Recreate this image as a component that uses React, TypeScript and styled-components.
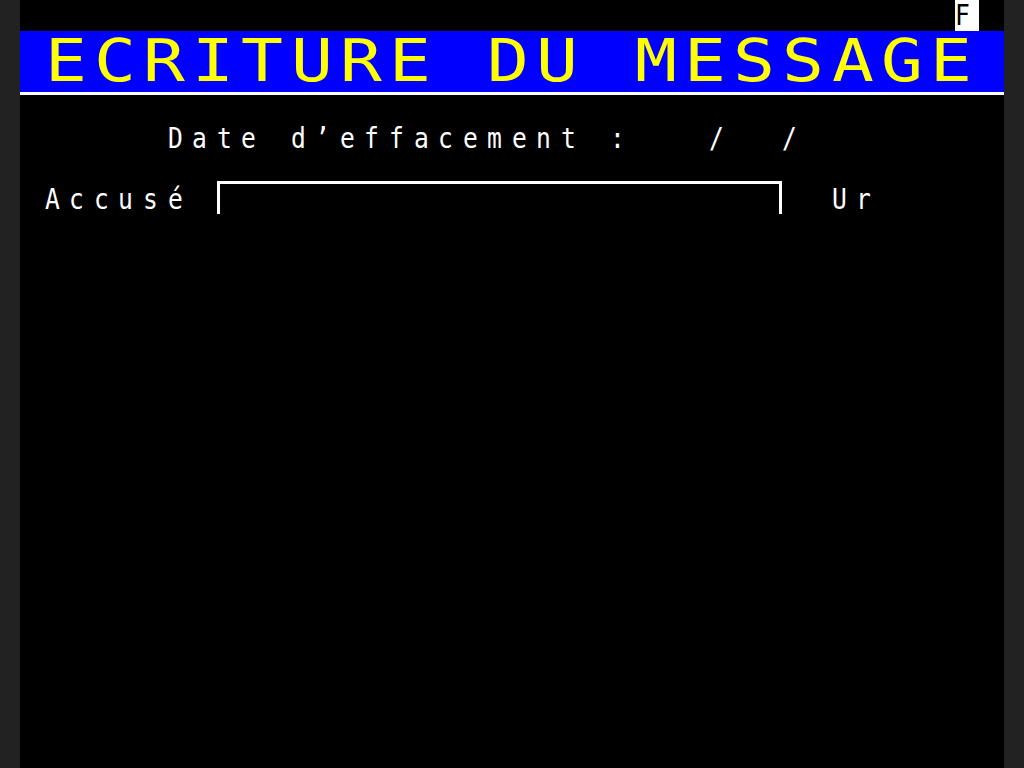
import styled, { createGlobalStyle } from "styled-components";

// Minitel geometry: 40 columns x 25 rows on a 984x768 tube
const COL = 24.6;
const ROW = 30.72;

const GlobalStyle = createGlobalStyle`
  html, body {
    margin: 0;
    padding: 0;
    background: #222222;
  }
  body {
    font-family: "DejaVu Sans Mono", "Liberation Mono", monospace;
  }
`;

const Monitor = styled.div`
  width: 1024px;
  height: 768px;
  display: flex;
  justify-content: center;
  background: #222222;
  overflow: hidden;
`;

const Screen = styled.div`
  width: ${COL * 40}px;
  height: 768px;
  background: #000000;
  display: flex;
  flex-direction: column;
`;

const Row = styled.div<{ $double?: boolean; $bg?: string; $rule?: boolean }>`
  display: grid;
  grid-template-columns: repeat(40, ${COL}px);
  grid-template-rows: 1fr;
  flex: none;
  height: ${(p) => (p.$double ? ROW * 2 : ROW)}px;
  background: ${(p) => p.$bg ?? "transparent"};
  box-sizing: border-box;
  border-top: ${(p) => (p.$rule ? "3px solid #ffffff" : "none")};
`;

const Cell = styled.div<{ $col: number; $double?: boolean; $fg: string; $bg?: string }>`
  grid-column: ${(p) => p.$col + 1} / span ${(p) => (p.$double ? 2 : 1)};
  grid-row: 1;
  color: ${(p) => p.$fg};
  background: ${(p) => p.$bg ?? "transparent"};
  font-size: ${(p) => (p.$double ? 58 : 29)}px;
  line-height: ${(p) => (p.$double ? ROW * 2 : ROW)}px;
  white-space: pre;
  overflow: visible;
`;

const Glyph = styled.span<{ $double?: boolean }>`
  display: inline-block;
  transform: scaleX(${(p) => (p.$double ? 1.2 : 0.85)});
  transform-origin: left center;
`;

const Field = styled.div<{ $from: number; $to: number }>`
  grid-column: ${(p) => p.$from + 1} / ${(p) => p.$to + 2};
  grid-row: 1;
  align-self: start;
  margin-top: -3px;
  height: 33px;
  box-sizing: border-box;
  border: 3px solid #ffffff;
  border-bottom: none;
`;

type TextProps = {
  col: number;
  text: string;
  fg?: string;
  bg?: string;
  double?: boolean;
};

function Text({ col, text, fg = "#ffffff", bg, double }: TextProps) {
  const step = double ? 2 : 1;
  return (
    <>
      {Array.from(text).map((ch, i) =>
        ch === " " && !bg ? null : (
          <Cell key={i} $col={col + i * step} $double={double} $fg={fg} $bg={bg}>
            <Glyph $double={double}>{ch}</Glyph>
          </Cell>
        )
      )}
    </>
  );
}

export default function App() {
  return (
    <>
      <GlobalStyle />
      <Monitor>
        <Screen>
          <Row>
            <Text col={38} text="F" fg="#000000" bg="#ffffff" />
          </Row>
          <Row $double $bg="#0000ff">
            <Text col={1} text="ECRITURE DU MESSAGE" fg="#ffff00" double />
          </Row>
          <Row $rule />
          <Row>
            <Text col={6} text="Date d’effacement :   /  /" />
          </Row>
          <Row />
          <Row>
            <Text col={1} text="Accusé" />
            <Field $from={8} $to={30} />
            <Text col={33} text="Ur" />
          </Row>
        </Screen>
      </Monitor>
    </>
  );
}
